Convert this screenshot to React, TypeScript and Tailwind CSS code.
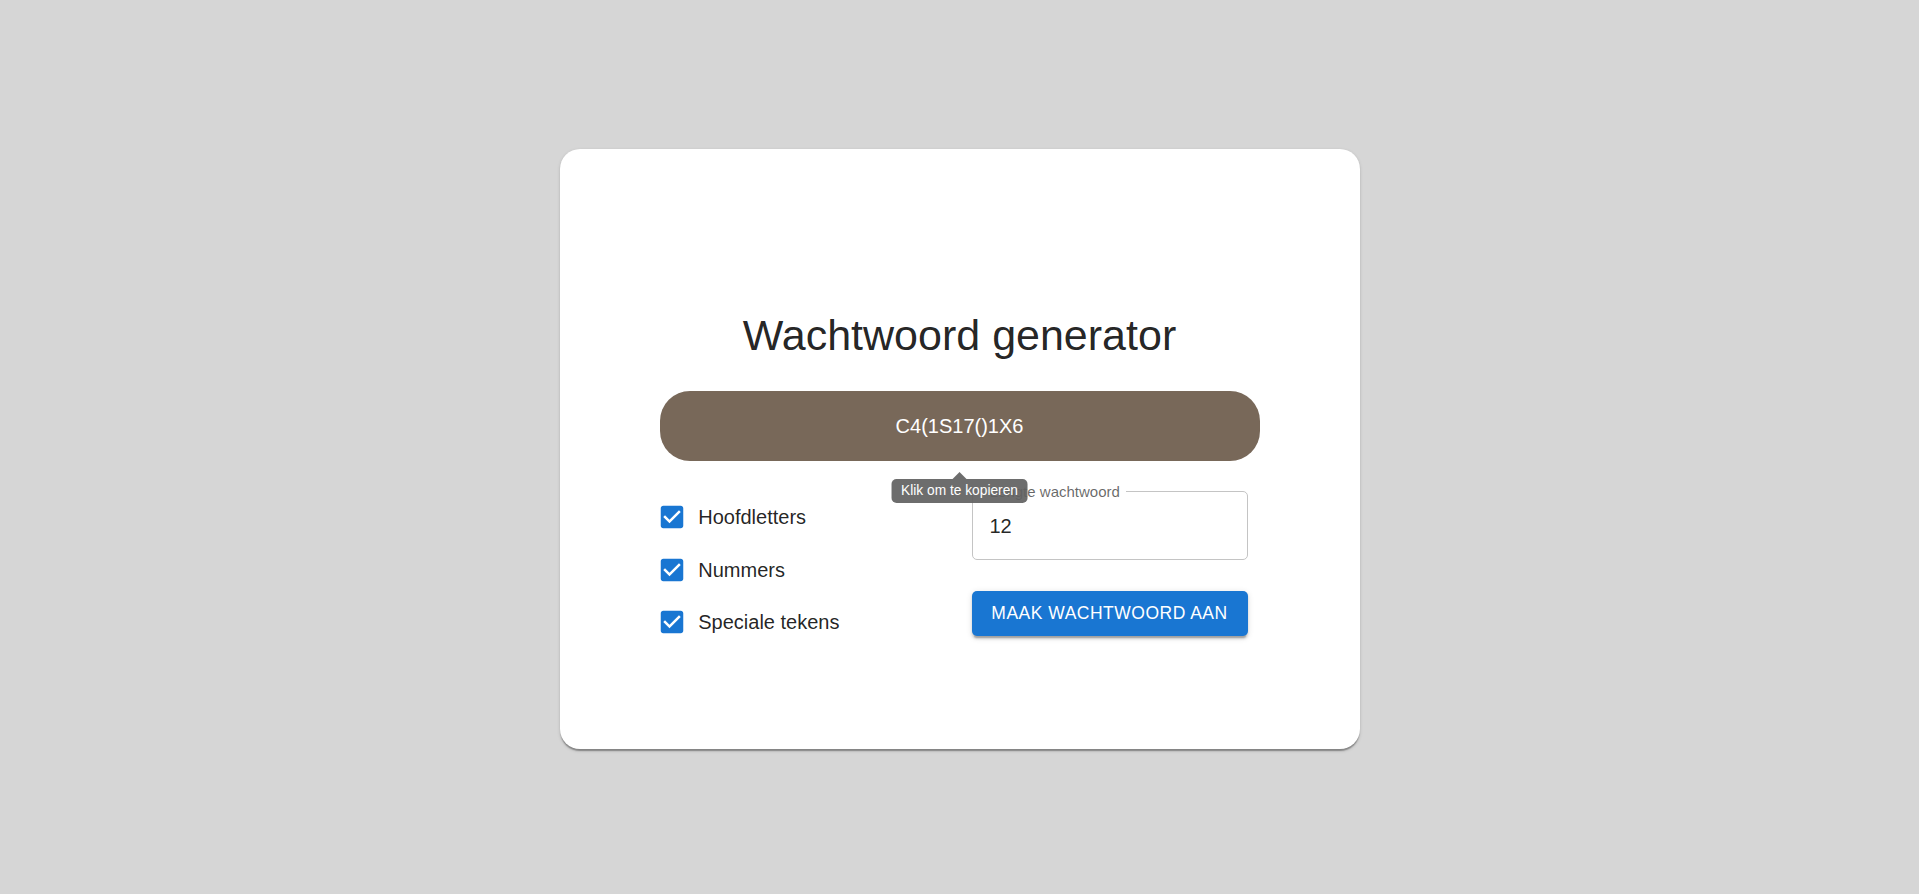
import React from "react";

const options = ["Hoofdletters", "Nummers", "Speciale tekens"];

function CheckedBox() {
  return (
    <svg viewBox="0 0 24 24" className="h-[30px] w-[30px] shrink-0 fill-[#1976d2]">
      <path d="M19 3H5c-1.11 0-2 .9-2 2v14c0 1.1.89 2 2 2h14c1.11 0 2-.9 2-2V5c0-1.1-.89-2-2-2zm-9 14l-5-5 1.41-1.41L10 14.17l7.59-7.59L19 8l-9 9z" />
    </svg>
  );
}

export default function App() {
  return (
    <div
      className="flex min-h-screen justify-center bg-[#d6d6d6] pt-[149px]"
      style={{ fontFamily: '"Liberation Sans", Arial, sans-serif' }}
    >
      <div className="flex h-[600px] w-[800px] flex-col items-center rounded-[20px] bg-white pt-[160px] shadow-[0_2.5px_1.25px_-1.25px_rgba(0,0,0,0.2),0_1.25px_1.25px_0_rgba(0,0,0,0.14),0_1.25px_3.75px_0_rgba(0,0,0,0.12)]">
        <h1 className="text-[43px] leading-[52.5px] font-normal text-[rgba(0,0,0,0.87)]">
          Wachtwoord generator
        </h1>

        <div className="relative mt-[29.5px] w-[600px]">
          <button className="flex h-[70px] w-full cursor-pointer items-center justify-center rounded-[30px] bg-[#786859] text-[20px] text-white">
            C4(1S17()1X6
          </button>
          <div className="absolute top-[88px] left-1/2 z-10 -translate-x-1/2">
            <div className="absolute -top-[7px] left-1/2 h-0 w-0 -translate-x-1/2 border-x-[7px] border-b-[7px] border-x-transparent border-b-[rgba(97,97,97,0.92)]" />
            <div className="rounded-[5px] bg-[rgba(97,97,97,0.92)] px-[10px] py-[4px] text-[13.75px] leading-[16px] whitespace-nowrap text-white">
              Klik om te kopieren
            </div>
          </div>
        </div>

        <div className="mt-[30px] flex w-[600px]">
          <div className="flex w-[300px] shrink-0 flex-col">
            {options.map((label) => (
              <label key={label} className="-ml-[2.5px] flex h-[52.5px] cursor-pointer items-center">
                <CheckedBox />
                <span className="ml-[11.25px] text-[20px] text-[rgba(0,0,0,0.87)]">{label}</span>
              </label>
            ))}
          </div>

          <div className="flex w-[300px] shrink-0 flex-col px-[12px]">
            <div className="relative flex h-[69px] items-center rounded-[5px] border border-[#c4c4c4] pl-[17px]">
              <span className="absolute -top-[10.5px] left-[11px] bg-white px-[6.25px] text-[15px] leading-[20px] whitespace-nowrap text-[rgba(0,0,0,0.6)]">
                Lengte wachtwoord
              </span>
              <span className="text-[20px] text-[rgba(0,0,0,0.87)]">12</span>
            </div>
            <button className="mt-[30.5px] h-[45.5px] w-full rounded-[5px] bg-[#1976d2] text-[17.5px] tracking-[0.5px] whitespace-nowrap text-white uppercase shadow-[0_3.75px_1.25px_-2.5px_rgba(0,0,0,0.2),0_2.5px_2.5px_0_rgba(0,0,0,0.14),0_1.25px_6.25px_0_rgba(0,0,0,0.12)]">
              Maak wachtwoord aan
            </button>
          </div>
        </div>
      </div>
    </div>
  );
}
